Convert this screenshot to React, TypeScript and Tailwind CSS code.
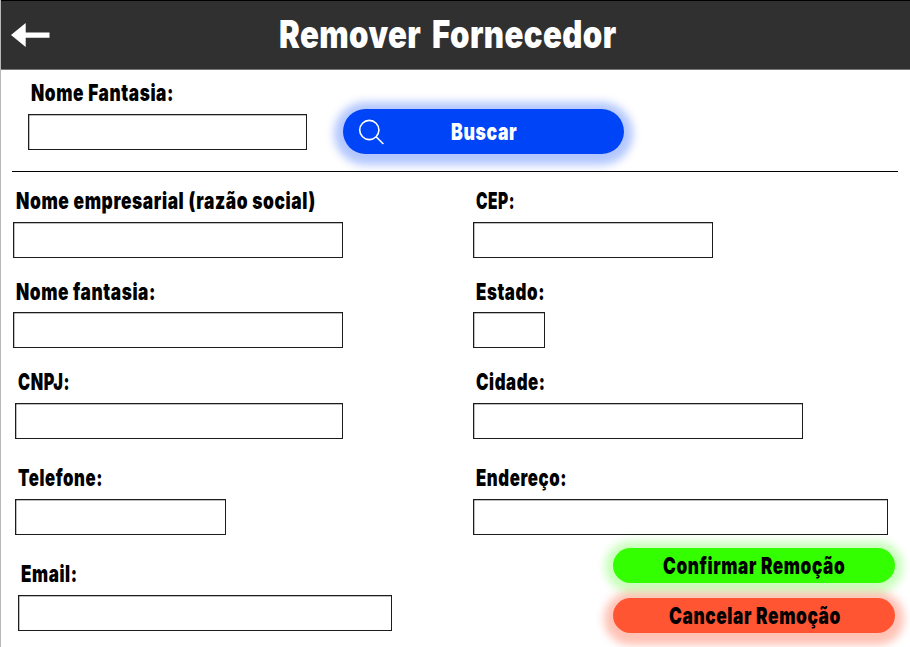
import { useLayoutEffect, useRef, useState } from "react";
import clsx from "clsx";

/** Condenses one line of text so that it spans exactly `width` pixels. */
function Condensed({ text, width, className }: { text: string; width: number; className?: string }) {
  const ref = useRef<HTMLSpanElement>(null);
  const [scale, setScale] = useState(1);
  useLayoutEffect(() => {
    if (ref.current) setScale(width / ref.current.offsetWidth);
  }, [text, width]);
  return (
    <span className={clsx("block whitespace-nowrap leading-none", className)} style={{ width }}>
      <span ref={ref} className="inline-block origin-left align-top" style={{ transform: `scaleX(${scale})` }}>
        {text}
      </span>
    </span>
  );
}

type FieldProps = {
  label: string;
  labelWidth: number;
  indent?: string;
  height?: string;
  className?: string;
  box: string;
};

function Field({ label, labelWidth, indent = "ml-[3px]", height = "h-[68px]", className, box }: FieldProps) {
  return (
    <label className={clsx("flex flex-col justify-between", height, className)}>
      <Condensed
        text={label}
        width={labelWidth}
        className={clsx("text-[23px] font-black tracking-[0.8px]", indent)}
      />
      <input
        type="text"
        className={clsx(
          "h-[36px] border border-[#1c1c1c] bg-white px-2 shadow-[inset_0_1px_0_rgba(0,0,0,0.25),inset_1px_0_0_rgba(0,0,0,0.25)] outline-none",
          box,
        )}
      />
    </label>
  );
}

export default function App() {
  return (
    <div className="flex h-[647px] w-[910px] flex-col overflow-hidden border-l border-[#b8b8b8] bg-white font-['Inter','Liberation_Sans',sans-serif] text-black">
      <header className="-ml-px flex h-[70px] shrink-0 items-start border-t border-b border-t-black border-b-[#777777] bg-[#303030] text-white">
        <button type="button" aria-label="Voltar" className="mt-[21px] ml-[11px] h-[26px] w-[40px]">
          <svg viewBox="0 0 40 26" className="h-[26px] w-[40px]" fill="#fff">
            <path d="M0 13 14.7 1V10.4H38.5V15.8H14.7V25Z" />
          </svg>
        </button>
        <h1 className="mt-[14px] ml-[228px]">
          <Condensed
            text="Remover Fornecedor"
            width={338}
            className="text-[38px] font-black tracking-[0.5px] [word-spacing:5px]"
          />
        </h1>
      </header>

      <section className="flex h-[101px] shrink-0 items-start">
        <Field label="Nome Fantasia:" labelWidth={143} className="mt-[12px] ml-[27px]" box="w-[279px]" />
        <button
          type="button"
          className="mt-[39px] ml-[36px] flex h-[45px] w-[281px] items-center rounded-full bg-[#0044f8] text-white shadow-[0_2px_9px_9px_rgba(0,68,255,0.3)]"
        >
          <svg viewBox="0 0 28 28" className="ml-[15px] h-[28px] w-[28px]" fill="none" stroke="#fff" strokeWidth="1.6">
            <circle cx="11.3" cy="12" r="9.6" />
            <path d="M18.1 18.8 25.4 26" />
          </svg>
          <Condensed
            text="Buscar"
            width={66}
            className="mt-[2px] ml-[65px] text-left text-[23px] font-black tracking-[0.8px]"
          />
        </button>
      </section>

      <hr className="relative ml-[11px] w-[886px] shrink-0 border-t border-black" />

      <main className="flex">
        <div className="flex w-[460px] flex-col items-start pl-[12px]">
          <Field label="Nome empresarial (razão social)" labelWidth={300} className="mt-[18px]" box="w-[330px]" />
          <Field label="Nome fantasia:" labelWidth={140} height="h-[67px]" className="mt-[23px]" box="w-[330px]" />
          <Field label="CNPJ:" labelWidth={52} className="mt-[23px] ml-[2px]" box="w-[328px]" />
          <Field label="Telefone:" labelWidth={85} className="mt-[28px] ml-[2px]" box="w-[211px]" />
          <Field label="Email:" labelWidth={57} className="mt-[28px] ml-[5px]" box="w-[374px]" />
        </div>
        <div className="flex flex-1 flex-col items-start pl-[12px]">
          <Field label="CEP:" labelWidth={39} className="mt-[18px]" box="w-[240px]" />
          <Field label="Estado:" labelWidth={69} height="h-[67px]" className="mt-[23px]" box="w-[72px]" />
          <Field label="Cidade:" labelWidth={70} className="mt-[23px]" box="w-[330px]" />
          <Field label="Endereço:" labelWidth={91} className="mt-[28px]" box="w-[415px]" />
          <button
            type="button"
            className="mt-[13px] ml-[140px] flex h-[35px] w-[282px] items-center justify-center rounded-full bg-[#33ff00] shadow-[0_1px_9px_8px_rgba(51,255,0,0.27)]"
          >
            <Condensed
              text="Confirmar Remoção"
              width={182}
              className="mt-[2px] text-left text-[23px] font-black tracking-[0.8px]"
            />
          </button>
          <button
            type="button"
            className="mt-[15px] ml-[140px] flex h-[35px] w-[282px] items-center justify-center rounded-full bg-[#ff5533] shadow-[0_3px_9px_9px_rgba(255,85,51,0.36)]"
          >
            <Condensed
              text="Cancelar Remoção"
              width={172}
              className="mt-[2px] ml-px text-left text-[23px] font-black tracking-[0.8px]"
            />
          </button>
        </div>
      </main>
    </div>
  );
}
